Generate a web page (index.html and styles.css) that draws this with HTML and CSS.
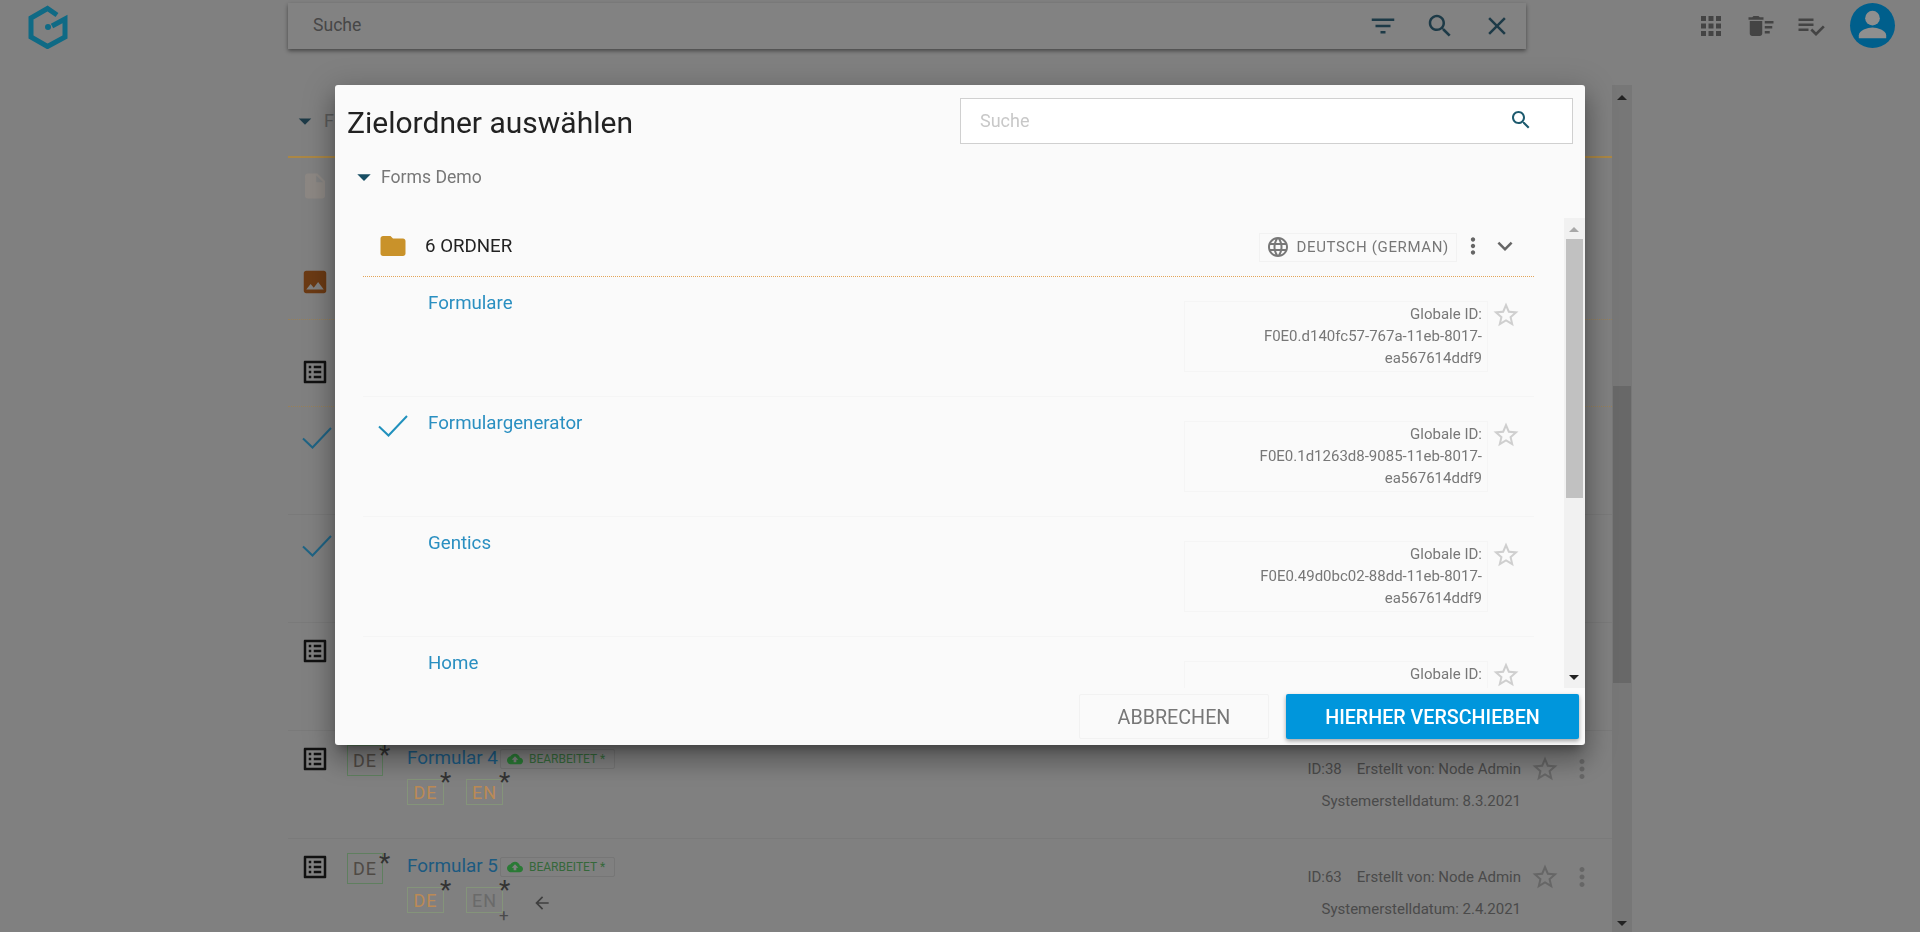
FILE: index.html
```html
<!DOCTYPE html>
<html lang="de">
<head>
    <meta charset="UTF-8">
    <meta name="viewport" content="width=device-width, initial-scale=1.0">
    <title>Zielordner auswählen</title>
    <link rel="stylesheet" href="styles.css">
</head>
<body>
    <svg class="sprite" xmlns="http://www.w3.org/2000/svg">
        <symbol id="i-filter" viewBox="0 0 24 24"><path d="M10 18h4v-2h-4v2zM3 6v2h18V6H3zm3 7h12v-2H6v2z"/></symbol>
        <symbol id="i-search" viewBox="0 0 24 24"><path d="M15.5 14h-.79l-.28-.27C15.41 12.59 16 11.11 16 9.5 16 5.91 13.09 3 9.5 3S3 5.91 3 9.5 5.91 16 9.5 16c1.61 0 3.09-.59 4.23-1.57l.27.28v.79l5 4.99L20.49 19l-4.99-5zm-6 0C7.01 14 5 11.99 5 9.5S7.01 5 9.5 5 14 7.01 14 9.5 11.99 14 9.5 14z"/></symbol>
        <symbol id="i-close" viewBox="0 0 24 24"><path d="M19 6.41L17.59 5 12 10.59 6.41 5 5 6.41 10.59 12 5 17.59 6.41 19 12 13.41 17.59 19 19 17.59 13.41 12z"/></symbol>
        <symbol id="i-apps" viewBox="0 0 24 24"><path d="M4 8h4V4H4v4zm6 12h4v-4h-4v4zm-6 0h4v-4H4v4zm0-6h4v-4H4v4zm6 0h4v-4h-4v4zm6-10v4h4V4h-4zm-6 4h4V4h-4v4zm6 6h4v-4h-4v4zm0 6h4v-4h-4v4z"/></symbol>
        <symbol id="i-trash" viewBox="0 0 24 24"><path d="M15 16h4v2h-4zm0-8h7v2h-7zm0 4h6v2h-6zM3 18c0 1.1.9 2 2 2h6c1.1 0 2-.9 2-2V8H3v10zM14 5h-3l-1-1H6L5 5H2v2h12z"/></symbol>
        <symbol id="i-tasks" viewBox="0 0 24 24"><path d="M14 10H2v2h12v-2zm0-4H2v2h12V6zM2 16h8v-2H2v2zm19.5-4.5L23 13l-6.99 7-4.51-4.5L13 14l3.01 3 5.49-5.5z"/></symbol>
        <symbol id="i-caret" viewBox="0 0 24 24"><path d="M7 10l5 5 5-5z"/></symbol>
        <symbol id="i-folder" viewBox="0 0 24 24"><path d="M10 4H4c-1.1 0-1.99.9-1.99 2L2 18c0 1.1.9 2 2 2h16c1.1 0 2-.9 2-2V8c0-1.1-.9-2-2-2h-8l-2-2z"/></symbol>
        <symbol id="i-globe" viewBox="0 0 24 24"><path d="M11.99 2C6.47 2 2 6.48 2 12s4.47 10 9.99 10C17.52 22 22 17.52 22 12S17.52 2 11.99 2zm6.93 6h-2.95c-.32-1.25-.78-2.45-1.38-3.56 1.84.63 3.37 1.91 4.33 3.56zM12 4.04c.83 1.2 1.48 2.53 1.91 3.96h-3.82c.43-1.43 1.08-2.76 1.91-3.96zM4.26 14C4.1 13.36 4 12.69 4 12s.1-1.36.26-2h3.38c-.08.66-.14 1.32-.14 2 0 .68.06 1.34.14 2H4.26zm.82 2h2.95c.32 1.25.78 2.45 1.38 3.56-1.84-.63-3.37-1.9-4.33-3.56zm2.95-8H5.08c.96-1.66 2.49-2.93 4.33-3.56C8.81 5.55 8.35 6.75 8.03 8zM12 19.96c-.83-1.2-1.48-2.53-1.91-3.96h3.82c-.43 1.43-1.08 2.76-1.91 3.96zM14.34 14H9.66c-.09-.66-.16-1.32-.16-2 0-.68.07-1.35.16-2h4.68c.09.65.16 1.32.16 2 0 .68-.07 1.34-.16 2zm.25 5.56c.6-1.11 1.06-2.31 1.38-3.56h2.95c-.96 1.65-2.49 2.93-4.33 3.56zM16.36 14c.08-.66.14-1.32.14-2 0-.68-.06-1.34-.14-2h3.38c.16.64.26 1.31.26 2s-.1 1.36-.26 2h-3.38z"/></symbol>
        <symbol id="i-more" viewBox="0 0 24 24"><path d="M12 8c1.1 0 2-.9 2-2s-.9-2-2-2-2 .9-2 2 .9 2 2 2zm0 2c-1.1 0-2 .9-2 2s.9 2 2 2 2-.9 2-2-.9-2-2-2zm0 6c-1.1 0-2 .9-2 2s.9 2 2 2 2-.9 2-2-.9-2-2-2z"/></symbol>
        <symbol id="i-expand" viewBox="0 0 24 24"><path d="M16.59 8.59L12 13.17 7.41 8.59 6 10l6 6 6-6z"/></symbol>
        <symbol id="i-star" viewBox="0 0 24 24"><path d="M22 9.24l-7.19-.62L12 2 9.19 8.63 2 9.24l5.46 4.73L5.82 21 12 17.27 18.18 21l-1.64-7.03L22 9.24zM12 15.4l-3.76 2.27 1-4.28-3.32-2.88 4.38-.38L12 6.1l1.71 4.04 4.38.38-3.32 2.88 1 4.28L12 15.4z"/></symbol>
        <symbol id="i-form" viewBox="0 0 24 24"><path d="M19 5v14H5V5h14m1.1-2H3.9c-.5 0-.9.4-.9.9v16.2c0 .4.4.9.9.9h16.2c.4 0 .9-.5.9-.9V3.9c0-.5-.5-.9-.9-.9zM11 7h6v2h-6V7zm0 4h6v2h-6v-2zm0 4h6v2h-6zM7 7h2v2H7zm0 4h2v2H7zm0 4h2v2H7z"/></symbol>
        <symbol id="i-file" viewBox="0 0 24 24"><path d="M6 2c-1.1 0-1.99.9-1.99 2L4 20c0 1.1.89 2 1.99 2H18c1.1 0 2-.9 2-2V8l-6-6H6zm7 7V3.5L18.5 9H13z"/></symbol>
        <symbol id="i-photo" viewBox="0 0 24 24"><path d="M21 19V5c0-1.1-.9-2-2-2H5c-1.1 0-2 .9-2 2v14c0 1.1.9 2 2 2h14c1.1 0 2-.9 2-2zM8.5 13.5l2.5 3.01L14.5 12l4.5 6H5l3.5-4.5z"/></symbol>
        <symbol id="i-cloud" viewBox="0 0 24 24"><path d="M19.35 10.04C18.67 6.59 15.64 4 12 4 9.11 4 6.6 5.64 5.35 8.04 2.34 8.36 0 10.91 0 14c0 3.31 2.69 6 6 6h13c2.76 0 5-2.24 5-5 0-2.64-2.05-4.78-4.65-4.96zM14 13v4h-4v-4H7l5-5 5 5h-3z"/></symbol>
        <symbol id="i-back" viewBox="0 0 24 24"><path d="M20 11H7.83l5.59-5.59L12 4l-8 8 8 8 1.41-1.41L7.83 13H20v-2z"/></symbol>
        <symbol id="i-check" viewBox="0 0 30 22"><path d="M1 11.5l9.5 9L29 1" fill="none" stroke="currentColor" stroke-width="2"/></symbol>
    </svg>

    <!-- page behind the dialog -->
    <header class="topbar">
        <svg class="logo" viewBox="0 0 40 44"><path d="M29 10L19.5 3.5 3 13v19l16.5 9.500L37 32V14l-13 7" fill="none" stroke="currentColor" stroke-width="5"/><circle cx="20" cy="22" r="3" fill="currentColor"/></svg>
        <div class="global-search">
            <span class="global-search-label">Suche</span>
            <svg class="icon"><use href="#i-filter"/></svg>
            <svg class="icon"><use href="#i-search"/></svg>
            <svg class="icon"><use href="#i-close"/></svg>
        </div>
        <div class="top-actions">
            <svg class="icon"><use href="#i-apps"/></svg>
            <svg class="icon"><use href="#i-trash"/></svg>
            <svg class="icon"><use href="#i-tasks"/></svg>
            <div class="avatar">
                <svg viewBox="0 0 46 46"><circle cx="23" cy="15.500" r="7.500"/><path d="M9 36v-3c0-5 9-8 14-8s14 3 14 8v3z"/></svg>
            </div>
        </div>
    </header>

    <div class="main">
        <div class="list-panel">
            <div class="crumb">
                <svg class="icon caret"><use href="#i-caret"/></svg>
                <span class="crumb-label">F</span>
            </div>
            <div class="bg-row bg-row-files">
                <div class="file-group">
                    <svg class="icon icon-file"><use href="#i-file"/></svg>
                    <svg class="icon icon-photo"><use href="#i-photo"/></svg>
                </div>
                <svg class="icon bg-expand"><use href="#i-expand"/></svg>
            </div>
            <div class="bg-row bg-row-forms">
                <svg class="icon"><use href="#i-form"/></svg>
                <svg class="icon bg-expand"><use href="#i-expand"/></svg>
            </div>
            <div class="bg-row"><svg class="bg-check"><use href="#i-check"/></svg></div>
            <div class="bg-row"><svg class="bg-check"><use href="#i-check"/></svg></div>
            <div class="bg-row"><svg class="icon"><use href="#i-form"/></svg></div>
            <div class="bg-row">
                <svg class="icon"><use href="#i-form"/></svg>
                <div class="badge badge-lead">DE<span class="mark">*</span></div>
                <div class="item-main">
                    <div class="item-title">
                        <span class="item-name">Formular 4</span>
                        <span class="status-chip"><svg class="chip-icon"><use href="#i-cloud"/></svg>BEARBEITET *</span>
                    </div>
                    <div class="item-langs">
                        <div class="badge badge-small">DE<span class="mark">*</span></div>
                        <div class="badge badge-small">EN<span class="mark">*</span></div>
                    </div>
                </div>
                <div class="item-meta">
                    <div><span>ID:38</span><span class="meta-author">Erstellt von: Node Admin</span></div>
                    <div class="meta-date">Systemerstelldatum: 8.3.2021</div>
                </div>
                <svg class="icon icon-star"><use href="#i-star"/></svg>
                <svg class="icon icon-more"><use href="#i-more"/></svg>
            </div>
            <div class="bg-row">
                <svg class="icon"><use href="#i-form"/></svg>
                <div class="badge badge-lead">DE<span class="mark">*</span></div>
                <div class="item-main">
                    <div class="item-title">
                        <span class="item-name">Formular 5</span>
                        <span class="status-chip"><svg class="chip-icon"><use href="#i-cloud"/></svg>BEARBEITET *</span>
                    </div>
                    <div class="item-langs">
                        <div class="badge badge-small">DE<span class="mark">*</span></div>
                        <div class="badge badge-small badge-grey">EN<span class="mark">*</span><span class="mark-plus">+</span></div>
                        <svg class="icon-back"><use href="#i-back"/></svg>
                    </div>
                </div>
                <div class="item-meta">
                    <div><span>ID:63</span><span class="meta-author">Erstellt von: Node Admin</span></div>
                    <div class="meta-date">Systemerstelldatum: 2.4.2021</div>
                </div>
                <svg class="icon icon-star"><use href="#i-star"/></svg>
                <svg class="icon icon-more"><use href="#i-more"/></svg>
            </div>
        </div>
        <div class="page-scrollbar">
            <svg class="scroll-arrow scroll-arrow-up"><use href="#i-caret"/></svg>
            <div class="page-scrollbar-thumb"></div>
            <svg class="scroll-arrow"><use href="#i-caret"/></svg>
        </div>
    </div>

    <!-- move dialog -->
    <div class="modal">
        <div class="modal-header">
            <h1 class="modal-title">Zielordner auswählen</h1>
            <div class="modal-search">
                <input type="text" class="modal-search-input" placeholder="Suche">
                <svg class="modal-search-icon"><use href="#i-search"/></svg>
            </div>
        </div>
        <div class="node-crumb">
            <svg class="node-caret"><use href="#i-caret"/></svg>
            <span>Forms Demo</span>
        </div>
        <div class="folder-area">
            <div class="folder-list">
                <div class="folder-head">
                    <svg class="folder-icon"><use href="#i-folder"/></svg>
                    <span class="folder-count">6 ORDNER</span>
                    <div class="lang-chip">
                        <svg class="lang-icon"><use href="#i-globe"/></svg>
                        DEUTSCH (GERMAN)
                    </div>
                    <svg class="head-more"><use href="#i-more"/></svg>
                    <svg class="head-expand"><use href="#i-expand"/></svg>
                </div>
                <div class="folder-row">
                    <div class="row-check"></div>
                    <a class="folder-name">Formulare</a>
                    <div class="folder-id">Globale ID:<br>F0E0.d140fc57-767a-11eb-8017-ea567614ddf9</div>
                    <svg class="folder-star"><use href="#i-star"/></svg>
                </div>
                <div class="folder-row">
                    <div class="row-check"><svg><use href="#i-check"/></svg></div>
                    <a class="folder-name">Formulargenerator</a>
                    <div class="folder-id">Globale ID:<br>F0E0.1d1263d8-9085-11eb-8017-ea567614ddf9</div>
                    <svg class="folder-star"><use href="#i-star"/></svg>
                </div>
                <div class="folder-row">
                    <div class="row-check"></div>
                    <a class="folder-name">Gentics</a>
                    <div class="folder-id">Globale ID:<br>F0E0.49d0bc02-88dd-11eb-8017-ea567614ddf9</div>
                    <svg class="folder-star"><use href="#i-star"/></svg>
                </div>
                <div class="folder-row">
                    <div class="row-check"></div>
                    <a class="folder-name">Home</a>
                    <div class="folder-id">Globale ID:</div>
                    <svg class="folder-star"><use href="#i-star"/></svg>
                </div>
            </div>
            <div class="modal-scrollbar">
                <svg class="scroll-arrow scroll-arrow-up"><use href="#i-caret"/></svg>
                <div class="modal-scrollbar-thumb"></div>
                <svg class="scroll-arrow"><use href="#i-caret"/></svg>
            </div>
        </div>
        <div class="modal-footer">
            <button class="btn-cancel">ABBRECHEN</button>
            <button class="btn-move">HIERHER VERSCHIEBEN</button>
        </div>
    </div>
</body>
</html>
```

FILE: styles.css
```css
* { margin: 0; padding: 0; box-sizing: border-box; }
html, body { height: 100%; overflow: hidden; }
body {
    font-family: Roboto, "Liberation Sans", sans-serif;
    background: #808080;
    color: #444;
}
.sprite { display: none; }
.icon { width: 30px; height: 30px; fill: currentColor; flex-shrink: 0; display: block; }

/* top bar */
.topbar { display: flex; align-items: flex-start; height: 49px; }
.logo { width: 40px; height: 44px; margin: 5px 0 0 28px; color: #0f6a85; flex-shrink: 0; }
.global-search {
    display: flex;
    align-items: center;
    gap: 27px;
    width: 1238px;
    height: 46px;
    margin: 3px 0 0 220px;
    padding: 0 14px 0 25px;
    background: #828282;
    box-shadow: 0 2px 4px rgba(0, 0, 0, 0.45);
    color: #1d3a47;
}
.global-search-label { flex: 1; margin-bottom: 2px; font-size: 17.6px; color: #474747; }
.top-actions { display: flex; align-items: center; gap: 20px; margin-left: auto; padding: 3px 25px 0 0; color: #444; }
.avatar { width: 45px; height: 45px; margin-left: 4px; border-radius: 50%; background: #005f8c; }
.avatar svg { width: 45px; height: 45px; fill: #8f8f8f; display: block; }

/* list behind the dialog */
.main { display: flex; width: 1344px; margin: 36px 0 0 288px; }
.list-panel { width: 1324px; }
.crumb {
    display: flex;
    align-items: center;
    height: 73px;
    padding: 0 0 0 2px;
    border-bottom: 2px solid #ab8745;
    color: #1d3a47;
}
.crumb-label { margin-left: 4px; font-size: 18px; color: #5a5a5a; }
.bg-row {
    display: flex;
    align-items: flex-start;
    height: 108px;
    padding: 13px 15px 0 12px;
    border-bottom: 1px solid #7a7a7a;
    color: #111;
}
.bg-row-files { height: 162px; padding-top: 0; border-bottom: 1px dotted #97805a; }
.bg-row-forms { height: 87px; padding-top: 37px; border-bottom: 1px dotted #97805a; }
.file-group { display: flex; flex-direction: column; }
.icon-file { margin-top: 13px; color: #8d8884; }
.icon-photo { margin-top: 66px; color: #6b3a14; }
.bg-expand { margin-left: auto; margin-right: 10px; color: #444; }
.bg-row-files .bg-expand { margin-top: 23px; }
.bg-check { width: 30px; height: 22px; margin: 7px 0 0 2px; color: #1f6485; }

.badge {
    position: relative;
    display: flex;
    align-items: center;
    justify-content: center;
    border: 1px solid #5f7f5f;
    letter-spacing: 1px;
    flex-shrink: 0;
}
.badge-lead { width: 36px; height: 31px; margin: 1px 0 0 17px; font-size: 18px; color: #4f4a45; }
.badge-small { width: 37px; height: 26px; font-size: 18px; color: #bb8a55; border-color: #84947a; }
.badge-grey { color: #6a6a6a; }
.mark { position: absolute; top: -13px; left: 100%; margin-left: -3px; font-size: 26px; line-height: 30px; letter-spacing: 0; color: #333; }
.badge-lead .mark { top: -6px; margin-left: -3px; }
.mark-plus { position: absolute; top: 17px; left: 100%; margin-left: -3px; font-size: 17px; letter-spacing: 0; color: #4a4a4a; }

.item-main { margin-left: 24px; }
.item-title { display: flex; align-items: center; height: 26px; }
.item-name { font-size: 18.9px; color: #1c5a80; }
.status-chip {
    display: flex;
    align-items: center;
    height: 20px;
    margin: 3px 0 0 2px;
    padding: 0 9px 0 6px;
    border: 1px solid #767676;
    border-radius: 2px;
    font-size: 12px;
    color: #35683a;
}
.chip-icon { width: 16px; height: 16px; margin-right: 6px; fill: #2a7a35; }
.item-langs { display: flex; align-items: flex-start; gap: 22px; margin-top: 9px; }
.icon-back { width: 20px; height: 20px; margin: 6px 0 0 7px; fill: #3f3f3f; }
.item-meta { margin: 16px 0 0 auto; font-size: 15px; color: #4a4a4a; text-align: right; }
.meta-author { margin-left: 15px; }
.meta-date { margin-top: 14px; }
.icon-star { margin: 10px 0 0 9px; color: #666; }
.icon-more { margin: 10px 0 0 7px; color: #666; }

.page-scrollbar { display: flex; flex-direction: column; width: 20px; height: 847px; background: #777; }
.page-scrollbar-thumb { width: 18px; height: 297px; margin: 279px 1px auto; background: #686868; }
.scroll-arrow { width: 24px; height: 24px; margin: -3px -2px; flex-shrink: 0; fill: #222; }
.scroll-arrow-up { transform: rotate(180deg); }
.page-scrollbar .scroll-arrow-up { margin-top: 1px; }

/* dialog */
.modal {
    position: fixed;
    left: 335px;
    top: 85px;
    display: flex;
    flex-direction: column;
    width: 1250px;
    height: 660px;
    background: #fafafa;
    border-radius: 3px;
    box-shadow: 0 16px 24px 2px rgba(0, 0, 0, 0.2), 0 6px 30px 5px rgba(0, 0, 0, 0.18), 0 8px 10px -5px rgba(0, 0, 0, 0.3);
}
.modal-header { display: flex; justify-content: space-between; align-items: center; height: 59px; padding: 13px 12px 0; flex-shrink: 0; }
.modal-title { margin-top: 3px; font-size: 30px; font-weight: 400; color: #222; }
.modal-search { position: relative; width: 613px; height: 46px; }
.modal-search-input {
    width: 100%;
    height: 100%;
    padding: 0 60px 2px 19px;
    border: 1px solid #d0d0d0;
    background: #fff;
    font: 18px Roboto, sans-serif;
    outline: none;
}
.modal-search-input::placeholder { color: #c8c8c8; }
.modal-search-icon { position: absolute; top: 10px; right: 40px; width: 24px; height: 24px; fill: #1d5a6e; }

.node-crumb { display: flex; align-items: center; height: 74px; padding: 0 0 8px 13px; font-size: 17.6px; color: #777; flex-shrink: 0; }
.node-caret { width: 32px; height: 32px; margin-right: 1px; fill: #174e63; }

.folder-area { display: flex; flex: 1; min-height: 0; }
.folder-list { flex: 1; min-width: 0; margin-left: 28px; padding-right: 30px; overflow: hidden; }
.folder-head {
    display: flex;
    align-items: center;
    height: 59px;
    padding: 0 14px 2px 15px;
    border-bottom: 1px dotted #e3a55a;
}
.folder-icon { width: 30px; height: 30px; fill: #c9922a; flex-shrink: 0; }
.folder-count { margin-left: 17px; font-size: 18.7px; color: #222; }
.lang-chip {
    display: flex;
    align-items: center;
    height: 29px;
    margin: 2px 0 0 auto;
    padding: 0 7px 0 6px;
    border: 1px solid #f2f2f2;
    font-size: 15px;
    letter-spacing: 0.65px;
    color: #777;
}
.lang-icon { width: 24px; height: 24px; margin-right: 7px; fill: #777; }
.head-more { width: 26px; height: 26px; margin-left: 3px; fill: #666; }
.head-expand { width: 30px; height: 30px; margin-left: 4px; fill: #666; }

.folder-row {
    display: flex;
    align-items: flex-start;
    height: 120px;
    padding: 0 13px 0 15px;
    border-bottom: 1px solid #f5f5f5;
}
.row-check { width: 30px; height: 22px; margin-top: 18px; flex-shrink: 0; color: #2191bd; }
.row-check svg { width: 30px; height: 22px; display: block; }
.folder-name { margin: 14px 0 0 20px; font-size: 18.7px; line-height: 24px; color: #2a8fc1; }
.folder-id {
    width: 304px;
    height: 71px;
    margin: 24px 0 0 auto;
    padding: 1px 5px 0 0;
    border: 1px solid #f5f5f5;
    font-size: 15px;
    line-height: 22px;
    color: #777;
    text-align: right;
}
.folder-star { width: 30px; height: 30px; margin: 23px 0 0 3px; fill: #cfcfcf; flex-shrink: 0; }

.modal-scrollbar { display: flex; flex-direction: column; width: 21px; background: #f1f1f1; flex-shrink: 0; }
.modal-scrollbar .scroll-arrow { margin-bottom: -1px; fill: #222; }
.modal-scrollbar .scroll-arrow-up { margin-top: 0; margin-bottom: -3px; fill: #a8a8a8; }
.modal-scrollbar-thumb { width: 17px; height: 259px; margin: 0 2px auto; background: #c1c1c1; }

.modal-footer { display: flex; justify-content: flex-end; gap: 17px; height: 57px; padding: 6px 6px 0 0; flex-shrink: 0; }
.btn-cancel, .btn-move { height: 45px; padding-top: 2px; border: none; font-family: Roboto, sans-serif; font-size: 19.7px; border-radius: 2px; }
.btn-cancel { width: 190px; border: 1px solid #f2f2f2; background: transparent; color: #777; }
.btn-move { width: 293px; background: #0096dc; color: #fff; font-weight: 500; box-shadow: 0 2px 4px rgba(0, 0, 0, 0.35); }
```
